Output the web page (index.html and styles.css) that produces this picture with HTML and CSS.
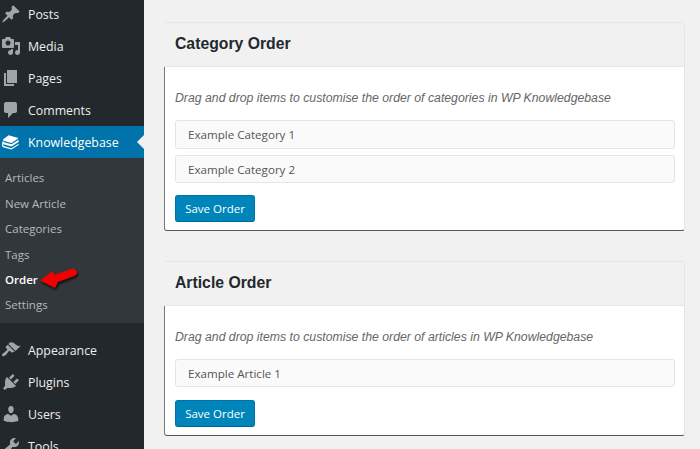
FILE: index.html
```html
<!DOCTYPE html>
<html lang="en">
<head>
    <meta charset="UTF-8">
    <title>Knowledgebase Order</title>
    <link rel="stylesheet" href="styles.css">
</head>
<body>
    <div class="sidebar">
        <a class="menu-item"><svg class="icon" viewBox="0 0 20 20"><path d="M10.44 3.02l1.82-1.82 6.36 6.35-1.83 1.82c-1.05-.68-2.48-.57-3.41.36l-.75.75c-.92.93-1.04 2.35-.35 3.41l-1.83 1.82-2.41-2.41-2.8 2.79c-.42.42-3.38 2.71-3.8 2.29s1.86-3.39 2.28-3.81l2.79-2.79L4.1 9.36l1.83-1.82c1.05.69 2.48.57 3.4-.36l.75-.75c.93-.92 1.05-2.35.36-3.41z"/></svg>Posts</a>
        <a class="menu-item"><svg class="icon" viewBox="0 0 20 20"><path d="M13 11V4c0-.55-.45-1-1-1h-1.67L9 1H5L3.67 3H2c-.55 0-1 .45-1 1v7c0 .55.45 1 1 1h10c.55 0 1-.45 1-1zM7 4.5c1.38 0 2.5 1.12 2.5 2.5S8.38 9.5 7 9.5 4.5 8.38 4.5 7 5.62 4.5 7 4.5zM14 6h5v10.5c0 1.38-1.12 2.5-2.5 2.5S14 17.88 14 16.5s1.12-2.5 2.5-2.5c.17 0 .34.02.5.05V9h-3V6zm-4 8.05V13h2v3.5c0 1.38-1.12 2.5-2.5 2.5S7 17.88 7 16.5 8.12 14 9.5 14c.17 0 .34.02.5.05z"/></svg>Media</a>
        <a class="menu-item"><svg class="icon" viewBox="0 0 20 20"><path d="M6 15V2h10v13H6zm-1 1h8v2H3V5h2v11z"/></svg>Pages</a>
        <a class="menu-item"><svg class="icon" viewBox="0 0 20 20"><path d="M5 2h9c1.1 0 2 .9 2 2v7c0 1.1-.9 2-2 2h-2l-5 5v-5H5c-1.1 0-2-.9-2-2V4c0-1.1.9-2 2-2z"/></svg>Comments</a>
        <a class="menu-item current"><svg class="icon" viewBox="0 -1 21 21"><path d="M8 2.500l9.500 2.500c.6.2.6.8.2 1.200L11 10.600 3.200 8.400c-1-.3-1.400-1.100-.8-1.800z"/><path fill-rule="evenodd" d="M2 8.400c-.7.8-.9 2-.5 3-.8 1.200-.6 3 .8 3.600l8.700 2.500 7.500-4.800v-1.400l-7.500 4.700-8-2.200c-.7-.3-.9-1.200-.5-1.900l8.500 2.300 7.500-4.800V7.200l-7.500 4.700-8-2.200c-.5-.2-.7-.7-.5-1.300z"/></svg>Knowledgebase</a>
        <div class="submenu">
            <a>Articles</a>
            <a>New Article</a>
            <a>Categories</a>
            <a>Tags</a>
            <a class="active">Order</a>
            <a>Settings</a>
        </div>
        <a class="menu-item"><svg class="icon" viewBox="0 0 20 20"><path d="M14.48 11.06L7.41 3.99l1.5-1.5c.5-.56 2.3-.47 3.51.32 1.21.8 1.43 1.28 2.91 2.1 1.18.64 2.45 1.26 4.45.85zm-.71.71L6.7 4.7 4.93 6.47c-.39.39-.39 1.02 0 1.41l1.06 1.06c.39.39.39 1.03 0 1.42-.6.6-1.43 1.11-2.21 1.69-.35.26-.7.53-1.01.84C1.43 13.23.4 14.96 1.3 15.87c.9.9 2.64-.13 3.98-1.47.31-.31.58-.66.85-1.02.57-.78 1.08-1.61 1.69-2.21.39-.39 1.02-.39 1.41 0l1.06 1.06c.39.39 1.02.39 1.41 0z"/></svg>Appearance</a>
        <a class="menu-item"><svg class="icon" viewBox="0 0 20 20"><path d="M13.11 4.36L9.87 7.6 8 5.73l3.24-3.24c.35-.34 1.05-.2 1.56.32.52.51.66 1.21.31 1.55zm-8 1.77l.91-1.12 9.01 9.01-1.19.84c-.71.71-2.63 1.16-3.82 1.16H6.14L4.9 17.26c-.59.59-1.54.59-2.12 0-.59-.58-.59-1.53 0-2.12l1.24-1.24v-3.88c0-1.13.4-3.19 1.09-3.89zm7.26 3.97l3.24-3.24c.34-.35 1.04-.21 1.55.31.52.51.66 1.21.31 1.55l-3.24 3.25z"/></svg>Plugins</a>
        <a class="menu-item"><svg class="icon" viewBox="0 0 20 20"><path d="M10 9.25c-2.27 0-2.73-3.44-2.73-3.44C7 4.02 7.82 2 9.97 2c2.16 0 2.98 2.02 2.71 3.81 0 0-.41 3.44-2.68 3.44zm0 2.57L12.72 10c2.39 0 4.52 2.33 4.52 4.53v2.49s-3.65 1.13-7.24 1.13c-3.65 0-7.24-1.13-7.24-1.13v-2.49c0-2.25 1.94-4.48 4.47-4.48z"/></svg>Users</a>
        <a class="menu-item"><svg class="icon" viewBox="0 0 20 20"><path d="M16.68 9.77c-1.34 1.34-3.3 1.67-4.95.99l-5.41 6.52c-.99.99-2.59.99-3.58 0s-.99-2.59 0-3.57l6.52-5.42c-.68-1.65-.35-3.61.99-4.95 1.28-1.28 3.12-1.62 4.72-1.06l-2.89 2.89 2.82 2.82 2.86-2.87c.53 1.58.18 3.39-1.08 4.65zM3.81 16.21c.4.39 1.04.39 1.43 0 .4-.4.4-1.04 0-1.43-.39-.4-1.03-.4-1.43 0-.39.39-.39 1.03 0 1.43z"/></svg>Tools</a>
        <!-- red arrow pointing at Order -->
        <svg class="pointer" viewBox="0 0 40 22"><path d="M1 12.500L13.700 3l2.300 3.700 16.700-6C35 0 38.500 2.500 38 5c-.3 1.500-1.500 2.500-3 3.200L19 14l-3 6z"/></svg>
    </div>

    <div class="content">
        <div class="card">
            <h2>Category Order</h2>
            <div class="card-body">
                <p>Drag and drop items to customise the order of categories in WP Knowledgebase</p>
                <div class="sort-item">Example Category 1</div>
                <div class="sort-item">Example Category 2</div>
                <button class="button">Save Order</button>
            </div>
        </div>
        <div class="card">
            <h2>Article Order</h2>
            <div class="card-body">
                <p>Drag and drop items to customise the order of articles in WP Knowledgebase</p>
                <div class="sort-item">Example Article 1</div>
                <button class="button">Save Order</button>
            </div>
        </div>
    </div>
</body>
</html>
```

FILE: styles.css
```css
/* General styles */
html, body {
    height: 100%;
}
body {
    margin: 0;
    display: flex;
    overflow: hidden;
    background-color: #f1f1f1;
    font-family: "Open Sans", sans-serif;
}

/* Sidebar */
.sidebar {
    position: relative;
    width: 144px;
    flex-shrink: 0;
    margin-top: -2px;
    background-color: #23282d;
}
.menu-item {
    position: relative;
    display: flex;
    align-items: center;
    height: 32px;
    color: #eeeeee;
    font-size: 12.35px;
}
.icon {
    width: 20px;
    height: 20px;
    margin: 0 7px 0 1px;
    fill: #a0a5aa;
}
.menu-item.current {
    background-color: #0073aa;
    color: white;
}
.menu-item.current .icon {
    fill: white;
}
.menu-item.current::after {
    content: "";
    position: absolute;
    right: 0;
    top: 9px;
    border: 7px solid transparent;
    border-left-width: 0;
    border-right-color: #f1f1f1;
}
.submenu {
    display: flex;
    flex-direction: column;
    margin-bottom: 11px;
    padding: 7.4px 0 5.6px;
    background-color: #32373c;
}
.submenu a {
    height: 25.4px;
    line-height: 25.4px;
    padding-left: 5px;
    color: #b4b9be;
    font-size: 11.5px;
}
.submenu a.active {
    color: white;
    font-weight: 600;
}
.pointer {
    position: absolute;
    left: 39px;
    top: 270px;
    width: 40px;
    height: 22px;
    fill: #f00000;
    filter: drop-shadow(1px 2px 1px rgba(0, 0, 0, 0.7));
}

/* Cards */
.content {
    flex: 1;
    padding: 22px 15px 0 20px;
}
.card {
    margin-bottom: 29.8px;
    background: white;
    border: 1px solid #e5e5e5;
    border-left-color: #777;
    border-bottom-color: #555;
    border-radius: 3px;
}
.card h2 {
    height: 18px;
    margin: 0 0 0 -1px;
    padding: 12px 10px 13px 11px;
    background-color: #f1f1f1;
    border-bottom: 1px solid #e5e5e5;
    color: #23282d;
    font-family: "Liberation Sans", sans-serif;
    font-size: 15.75px;
    line-height: 18px;
}
.card-body {
    padding: 23px 9px 8px 10px;
}
.card-body p {
    height: 16px;
    margin: 0 0 14px;
    color: #666;
    font-family: "Liberation Sans", sans-serif;
    font-size: 12.27px;
    font-style: italic;
    line-height: 16px;
}
.sort-item {
    box-sizing: border-box;
    height: 28.5px;
    line-height: 28px;
    margin-bottom: 6px;
    padding-left: 12px;
    background-color: #fafafa;
    border: 1px solid #e5e5e5;
    border-radius: 3px;
    color: #555;
    font-size: 11.6px;
}
.button {
    display: block;
    height: 27px;
    width: 80px;
    margin-top: 12.2px;
    padding: 0;
    background-color: #0085ba;
    border: 1px solid #0073aa;
    border-bottom-color: #006799;
    border-radius: 3px;
    color: white;
    font-family: "Open Sans", sans-serif;
    font-size: 11.5px;
}
```
